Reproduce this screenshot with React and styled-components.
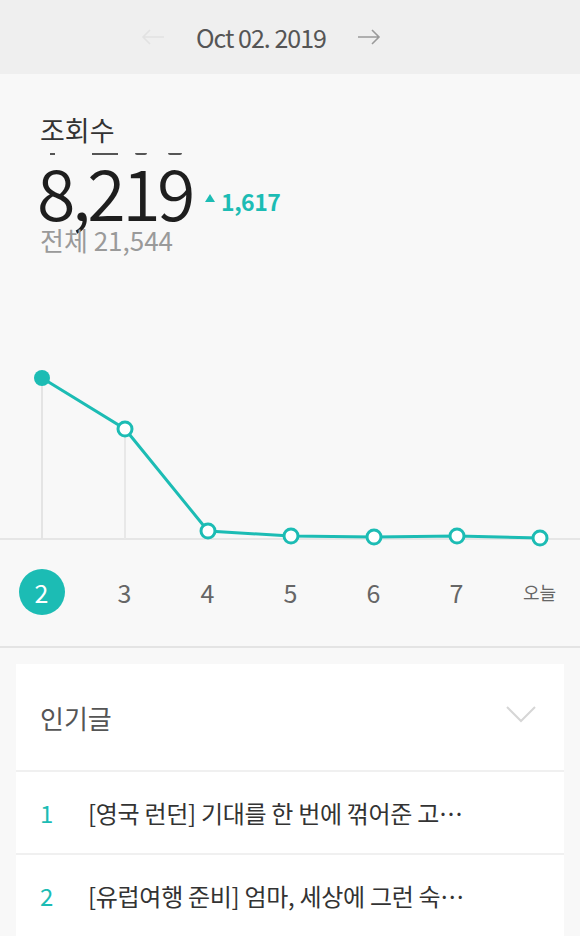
import React from "react";
import styled, { createGlobalStyle } from "styled-components";

const GlobalStyle = createGlobalStyle`
  html, body {
    margin: 0;
    padding: 0;
    background: #f8f8f8;
    font-family: "Noto Sans CJK KR", "Noto Sans", sans-serif;
  }
`;

const TEAL = "#1cbcb4";

const Page = styled.div`
  width: 580px;
  height: 936px;
  overflow: hidden;
  background: #f8f8f8;
`;

const Header = styled.div`
  height: 74px;
  background: #efefef;
  display: flex;
  align-items: center;
  justify-content: center;
  gap: 31px;
  padding-right: 58px;
`;

const DateText = styled.div`
  font-size: 25px;
  color: #555;
  letter-spacing: -1px;
`;

const Arrow = styled.svg`
  width: 24px;
  height: 16px;
  display: block;
`;

const Summary = styled.div`
  padding: 40px 0 0 40px;
`;

const Label = styled.div`
  font-size: 27px;
  line-height: 32px;
  color: #333;
`;

const Ticks = styled.div`
  display: flex;
  height: 2px;
  margin-top: 7px;
`;

const Tick = styled.span`
  display: block;
  width: ${(p) => p.w}px;
  height: 2px;
  margin-left: ${(p) => p.ml}px;
  background: #555;
  border-radius: ${(p) => (p.round ? "0 0 6px 6px" : "0")};
`;

const NumberRow = styled.div`
  display: flex;
  align-items: flex-end;
  margin: 4px 0 0 -3px;
`;

const BigNumber = styled.div`
  font-size: 70px;
  font-weight: 350;
  line-height: 64px;
  color: #1e1e1e;
  letter-spacing: -3.5px;
`;

const Delta = styled.div`
  display: flex;
  align-items: center;
  gap: 6px;
  margin: 0 0 8px 13px;
  font-size: 23px;
  line-height: 28px;
  font-weight: 700;
  color: ${TEAL};
  letter-spacing: -0.5px;
`;

const UpTriangle = styled.span`
  width: 0;
  height: 0;
  border-left: 5px solid transparent;
  border-right: 5px solid transparent;
  border-bottom: 8px solid ${TEAL};
  margin-top: -6px;
`;

const Total = styled.div`
  font-size: 26px;
  line-height: 30px;
  margin-top: 2px;
  color: #9a9a9a;
`;

const ChartWrap = styled.div`
  margin-top: 86px;
`;

const ChartSvg = styled.svg`
  display: block;
  width: 580px;
  height: 210px;
`;

const Days = styled.div`
  box-sizing: border-box;
  height: 97px;
  padding-top: 18px;
  display: grid;
  grid-template-columns: repeat(7, 83px);
  align-items: start;
  border-bottom: 2px solid #e4e4e4;
`;

const Day = styled.div`
  justify-self: center;
  width: 46px;
  height: 46px;
  border-radius: 50%;
  display: flex;
  align-items: center;
  justify-content: center;
  font-size: ${(p) => (p.small ? 18 : 25)}px;
  color: ${(p) => (p.active ? "#fff" : "#666")};
  background: ${(p) => (p.active ? TEAL : "transparent")};
`;

const Card = styled.div`
  margin: 16px 16px 0;
  background: #fff;
`;

const CardHeader = styled.div`
  height: 106px;
  display: flex;
  align-items: center;
  justify-content: space-between;
  padding: 0 28px 0 24px;
`;

const CardTitle = styled.div`
  font-size: 26px;
  color: #555;
`;

const Chevron = styled.svg`
  width: 30px;
  height: 18px;
  display: block;
  margin-top: -4px;
`;

const Row = styled.div`
  height: 81px;
  border-top: 2px solid #f0f0f0;
  display: flex;
  align-items: center;
  padding-left: 24px;
  font-size: 24px;
  color: #333;
`;

const Rank = styled.span`
  width: 48px;
  color: ${TEAL};
`;

const Title = styled.span`
  white-space: nowrap;
  letter-spacing: -0.3px;
`;

const points = [
  [42, 37],
  [125, 88],
  [208, 190],
  [291, 195],
  [374, 196],
  [457, 195],
  [540, 197],
];

const days = ["2", "3", "4", "5", "6", "7", "오늘"];

const posts = [
  "[영국 런던] 기대를 한 번에 꺾어준 고…",
  "[유럽여행 준비] 엄마, 세상에 그런 숙…",
];

const App = () => {
  return (
    <Page>
      <GlobalStyle />
      <Header>
        <Arrow viewBox="0 0 24 16">
          <path d="M23 8H2M9 1L2 8l7 7" fill="none" stroke="#e2e2e2" strokeWidth="1.6" />
        </Arrow>
        <DateText>Oct 02. 2019</DateText>
        <Arrow viewBox="0 0 24 16">
          <path d="M1 8h21M15 1l7 7-7 7" fill="none" stroke="#9a9a9a" strokeWidth="1.6" />
        </Arrow>
      </Header>

      <Summary>
        <Label>조회수</Label>
        <Ticks>
          <Tick ml={10} w={5} />
          <Tick ml={37} w={26} />
          <Tick ml={17} w={12} round />
          <Tick ml={21} w={14} round />
        </Ticks>
        <NumberRow>
          <BigNumber>8,219</BigNumber>
          <Delta>
            <UpTriangle />
            1,617
          </Delta>
        </NumberRow>
        <Total>전체 21,544</Total>
      </Summary>

      <ChartWrap>
        <ChartSvg viewBox="0 0 580 210">
          <line x1="0" y1="198" x2="580" y2="198" stroke="#e6e6e6" strokeWidth="2" />
          <line x1="42" y1="37" x2="42" y2="198" stroke="#e4e4e4" strokeWidth="2" />
          <line x1="125" y1="88" x2="125" y2="198" stroke="#e8e8e8" strokeWidth="2" />
          <polyline
            points={points.map((p) => p.join(",")).join(" ")}
            fill="none"
            stroke={TEAL}
            strokeWidth="3"
          />
          {points.map(([x, y], i) =>
            i === 0 ? (
              <circle key={i} cx={x} cy={y} r="8" fill={TEAL} />
            ) : (
              <circle key={i} cx={x} cy={y} r="7" fill="#fff" stroke={TEAL} strokeWidth="3" />
            )
          )}
        </ChartSvg>
      </ChartWrap>

      <Days>
        {days.map((d, i) => (
          <Day key={d} active={i === 0} small={d === "오늘"}>
            {d}
          </Day>
        ))}
      </Days>

      <Card>
        <CardHeader>
          <CardTitle>인기글</CardTitle>
          <Chevron viewBox="0 0 30 18">
            <path d="M1 1l14 14L29 1" fill="none" stroke="#d6d6d6" strokeWidth="2" />
          </Chevron>
        </CardHeader>
        {posts.map((t, i) => (
          <Row key={i}>
            <Rank>{i + 1}</Rank>
            <Title>{t}</Title>
          </Row>
        ))}
      </Card>
    </Page>
  );
};

export default App;
